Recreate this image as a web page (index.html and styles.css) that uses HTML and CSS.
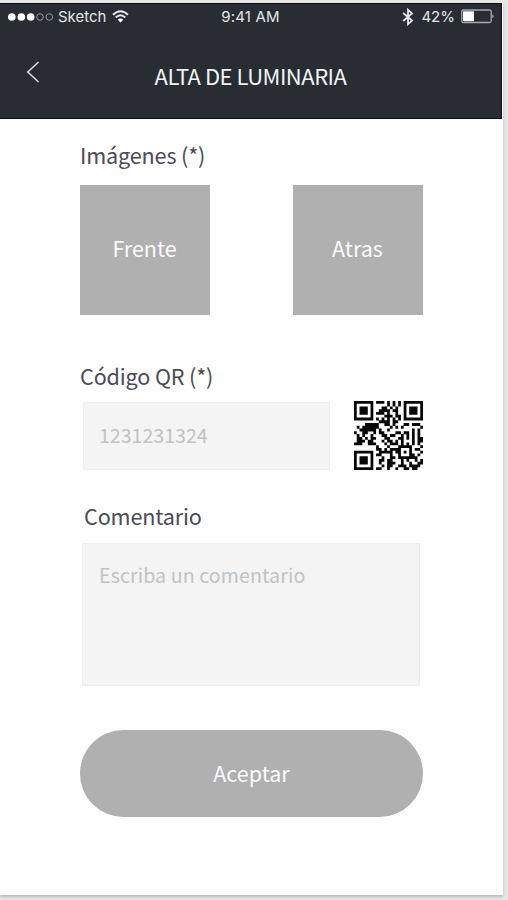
FILE: index.html
```
<!DOCTYPE html>
<html lang="es">
<head>
<meta charset="utf-8">
<title>Alta de luminaria</title>
<link rel="stylesheet" href="styles.css">
</head>
<body>
<main class="screen">
  <header class="header">
    <div class="status">
      <div class="status-left">
        <svg class="dots" width="46" height="10" viewBox="0 0 46 10"><g fill="#fff"><circle cx="4.8" cy="5" r="3.8"/><circle cx="14.3" cy="5" r="3.8"/><circle cx="23.7" cy="5" r="3.8"/></g><g fill="none" stroke="#8f969c"><circle cx="33" cy="5" r="3.3"/><circle cx="42.3" cy="5" r="3.3"/></g></svg>
        <span class="carrier">Sketch</span>
        <svg class="wifi" width="17" height="13" viewBox="0 0 17 13"><g fill="none" stroke="#e8eaeb" stroke-width="2"><path d="M1 4.7Q8.5 -2.3 16 4.7"/><path d="M3.7 7.5Q8.5 3 13.3 7.5"/></g><path d="M5.8 9.7Q8.5 7.3 11.2 9.7L8.5 12.5Z" fill="#fff"/></svg>
      </div>
      <span class="time">9:41 AM</span>
      <div class="status-right">
        <svg class="bluetooth" width="12" height="18" viewBox="0 0 12 18"><path d="M1.2 5L10 12.6L6 16.2V1.8L10 5.4L1.2 13" fill="none" stroke="#e4e7e8" stroke-width="1.8"/></svg>
        <span class="percent">42%</span>
        <svg class="battery" width="35" height="15" viewBox="0 0 35 15"><rect x="1.7" y="1" width="29.5" height="12.5" rx="1.5" fill="none" stroke="#a4a9ac" stroke-width="1.3"/><path d="M3 2.3H14V12.2H3Z" fill="#fff"/><path d="M32.3 5.2Q35 7.2 32.3 9.3Z" fill="#b7bbbd"/></svg>
      </div>
    </div>
    <div class="navbar">
      <svg class="back" width="14" height="24" viewBox="0 0 14 24"><path d="M12.5 2L1.8 12L12.5 22" fill="none" stroke="#d6d9dc" stroke-width="1.6"/></svg>
      <h1 class="title">ALTA DE LUMINARIA</h1>
    </div>
  </header>
  <form class="form">
    <h2 class="label label-images">Imágenes (*)</h2>
    <div class="images">
      <button type="button" class="tile">Frente</button>
      <button type="button" class="tile">Atras</button>
    </div>
    <label class="label label-code" for="code">Código QR (*)</label>
    <div class="code-row">
      <input class="field code" id="code" placeholder="1231231324">
      <svg class="qr" width="69" height="69" viewBox="0 0 25 25"><path id="qr-modules" fill="#080808"/></svg>
    </div>
    <label class="label label-comment" for="comment">Comentario</label>
    <textarea class="field comment" id="comment" placeholder="Escriba un comentario"></textarea>
    <button type="button" class="submit">Aceptar</button>
  </form>
</main>
<script src="qr.js"></script>
</body>
</html>
```
FILE: qr.js
```
// One string per row of QR modules; "1" is a dark module.
const rows = [
  "1111111011101010101111111",
  "1000001000001010101000001",
  "1011101000110101001011101",
  "1011101001111011001011101",
  "1011101011101001001011101",
  "1000001000011101101000001",
  "1111111010101010101111111",
  "0000000001111011000000000",
  "0000111110011010001101110",
  "0101111110000101010000001",
  "0011111101001000000001010",
  "1001100101100001101101010",
  "0101001000110110010101010",
  "0110101100011000110101011",
  "0111011000101101010001011",
  "1110011100010111010101010",
  "0000000010001000111110001",
  "0000000011010111100010110",
  "1111111001111101101010001",
  "1000001011000100100011010",
  "1011101000100110111111100",
  "1011101001101100010100101",
  "1011101001001110010010011",
  "1000001000101100111011110",
  "1111111011001001001101100"
];

let d = "";
rows.forEach((row, y) => {
  for (const run of row.matchAll(/1+/g)) {
    d += `M${run.index} ${y}h${run[0].length}v1.02h-${run[0].length}z`;
  }
});
document.getElementById("qr-modules").setAttribute("d", d);
```
FILE: styles.css
```
* { box-sizing: border-box; }
body {
  margin: 0;
  height: 900px;
  padding-top: 3px;
  overflow: hidden;
  background: #e7e7e7;
  font-family: "Noto Sans CJK SC", "Noto Sans", sans-serif;
}
.screen {
  width: 503px;
  height: 892px;
  background: #fefefe;
  box-shadow: 0 2px 3px #b8b8b8;
}
.header {
  width: 502px;
  height: 116px;
  border: 1px solid #080e19;
  border-left: 0;
  background: #282d34;
}
.status {
  display: grid;
  grid-template-columns: 1fr auto 1fr;
  align-items: center;
  height: 25px;
  padding: 0 6px 0 7px;
  color: #e4e6e8;
  font: 15px/25px Inter, sans-serif;
}
.status-left, .status-right { display: flex; align-items: center; }
.status-right { justify-content: flex-end; }
.carrier { margin: 0 6px 0 5px; }
.time { margin-right: 1px; letter-spacing: .2px; }
.percent { margin: 0 5px 0 7px; }
.navbar {
  display: grid;
  grid-template-columns: 54px 1fr 54px;
  align-items: center;
  height: 88px;
}
.back { margin-left: 26px; margin-bottom: 3px; }
.title {
  margin: 3px 0 0;
  color: #f2f4f6;
  font-size: 22px;
  font-weight: 400;
  line-height: 32px;
  letter-spacing: -.5px;
  text-align: center;
}
.form { display: flex; flex-direction: column; width: 343px; margin-left: 80px; }
.label { margin: 0; color: #4a4b55; font-size: 21.6px; font-weight: 400; line-height: 32px; letter-spacing: -.15px; }
.label-images { margin-top: 20px; }
.images { display: flex; justify-content: space-between; margin-top: 14px; }
.tile, .submit {
  padding: 0;
  border: 0;
  background: #b0b0b0;
  color: #fafafa;
  font: 21.5px/32px "Noto Sans CJK SC", sans-serif;
}
.tile { width: 130px; height: 130px; padding: 0 1px 4px 0; }
.label-code { margin-top: 45px; }
.code-row { display: flex; justify-content: space-between; margin: 9px 0 0 3px; }
.field {
  border: 1px solid #eee;
  outline: 0;
  background: #f4f4f4;
  font: 19.6px/30px "Noto Sans CJK SC", sans-serif;
  resize: none;
}
.field::placeholder { color: #bfc3c5; opacity: 1; }
.code { width: 247px; height: 68px; margin-top: 1px; padding: 0 15px 3px; }
.label-comment { margin: 30px 0 0 4px; }
.comment { width: 338px; height: 143px; margin: 11px 0 0 2px; padding: 16px; letter-spacing: .1px; }
.submit { width: 343px; height: 87px; margin-top: 44px; padding-bottom: 1px; border-radius: 44px; }
```
